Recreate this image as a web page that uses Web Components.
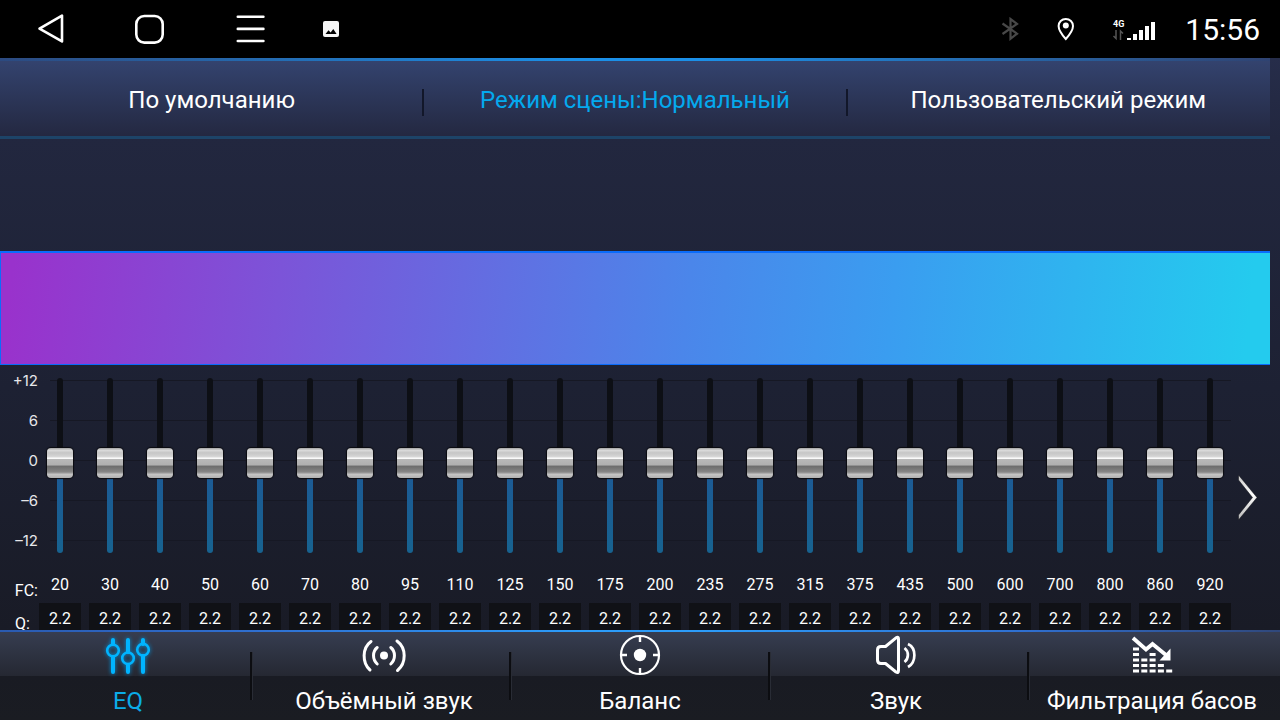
<!DOCTYPE html>
<html lang="ru">
<head>
<meta charset="utf-8">
<title>Эквалайзер</title>
<style>
  html, body { height: 100%; margin: 0; background: #000; }
  body { font-family: Roboto, "Liberation Sans", sans-serif; color: #fff; }
</style>
</head>
<body>
<eq-app></eq-app>

<template id="t-app">
  <style>
    :host { display: flex; flex-direction: column; height: 100vh; overflow: hidden; }
    main { flex: 1; min-height: 0; overflow: hidden; display: flex; flex-direction: column;
      background: linear-gradient(#262d4a, #22273f 80px, #1d2133 330px, #191b26); }
    .curve { height: 114px; box-sizing: border-box; margin: 112px 10px 0 0; flex: none;
      border: solid #0a6cfb; border-width: 2px 0 1px 1px;
      background: linear-gradient(96deg, #9932cc 1%, #7c54d8 22%, #4b86ea 54%, #3a9df0 70%, #24cbee 98%); }
  </style>
  <status-bar></status-bar>
  <main>
    <mode-bar>
      <mode-tab>По умолчанию</mode-tab>
      <mode-tab active>Режим сцены:Нормальный</mode-tab>
      <mode-tab>Пользовательский режим</mode-tab>
    </mode-bar>
    <div class="curve"></div>
    <eq-panel></eq-panel>
  </main>
  <nav-bar>
    <nav-tab active icon="eq">EQ</nav-tab>
    <nav-tab icon="surround">Объёмный звук</nav-tab>
    <nav-tab icon="balance">Баланс</nav-tab>
    <nav-tab icon="sound">Звук</nav-tab>
    <nav-tab icon="bass">Фильтрация басов</nav-tab>
  </nav-bar>
</template>

<template id="t-status">
  <style>
    :host { display: flex; align-items: center; height: 58px; flex: none; box-sizing: border-box; padding: 0 20px 0 35px; background: #000; color: #fff; }
    button { all: unset; width: 32px; height: 32px; margin-right: 68px; cursor: pointer; }
    button.last { margin-right: 56px; }
    svg { display: block; }
    .fill { flex: 1; }
    .gap { margin-right: 36px; }
    .signal { margin-right: 29px; }
    time { font-size: 30px; line-height: 40px; padding-top: 2px; }
    text { font: bold 9px Roboto, sans-serif; }
  </style>
  <button aria-label="Назад"><svg width="32" height="32" fill="none" stroke="#fff" stroke-width="2.6" stroke-linejoin="round"><path d="M4.5 15.6 27 2.6V28.4Z"/></svg></button>
  <button aria-label="Домой"><svg width="32" height="32" fill="none" stroke="#fff" stroke-width="2.6"><rect x="1.3" y="3" width="26.4" height="26.6" rx="8"/></svg></button>
  <button class="last" aria-label="Недавние"><svg width="32" height="32" stroke="#fff" stroke-width="2.6" stroke-linecap="round"><path d="M2.8 3.8H28.4M2.8 15.9H28.4M2.8 28H28.4"/></svg></button>
  <svg width="16" height="16"><rect width="16" height="16" rx="2" fill="#f5f5f5"/><path d="M2.5 13 5.5 9.3 7.6 11.6 10.3 7.9 13.6 13Z" fill="#000"/></svg>
  <span class="fill"></span>
  <svg class="gap" width="20" height="24" fill="none" stroke="#484848" stroke-width="2.200"><path d="M2.500 6.5 17 16.7 10.500 21.8V2L17 6.9 2.500 17"/></svg>
  <svg class="gap" width="20" height="24"><path d="M9.8 2C5.7 2 2.6 5.1 2.6 9 2.6 14 9.8 22 9.8 22S17 14 17 9C17 5.1 13.900 2 9.8 2Z" fill="none" stroke="#fff" stroke-width="2"/><circle cx="9.800" cy="8.600" r="3" fill="#fff"/></svg>
  <svg class="signal" width="44" height="24" fill="#fff"><text x="1" y="10">4G</text><path d="M15 21h4v2h-4zM21 17h4v6h-4zM27 13h4v10h-4zM33 9h4v14h-4zM39 5h4v18h-4z"/><path d="M4 13V21.500L1.500 19M8.500 23V14L11 16.500" fill="none" stroke="#555" stroke-width="1.500"/></svg>
  <time>15:56</time>
</template>

<template id="t-mode-bar">
  <style>
    :host { display: grid; grid-template-columns: repeat(3, 1fr); height: 81px; flex: none; margin-right: 10px; box-sizing: border-box;
      background: linear-gradient(90deg, #2c4a80, #1b90e8 45%, #1b90e8 55%, #2f4372) top / 100% 3px no-repeat,
        linear-gradient(#1d4468, #1d4468) bottom / 100% 3px no-repeat,
        linear-gradient(#344470, #23273f); }
  </style>
  <slot></slot>
</template>

<template id="t-mode-tab">
  <style>
    :host { display: flex; align-items: center; }
    :host(:not(:last-child))::after { content: ""; width: 2px; height: 27px; margin: 7px -1px 0; background: #12172a; }
    button { all: unset; flex: 1; text-align: center; font-size: 24px; line-height: 32px; white-space: nowrap; padding-top: 3px; cursor: pointer; }
    :host([active]) button { color: #04a9ee; }
  </style>
  <button><slot></slot></button>
</template>

<template id="t-panel">
  <style>
    :host { display: grid; grid-template-columns: 39px 1fr 49px; flex: 1; min-height: 0; box-sizing: border-box; padding-top: 13px; }
    .scale { display: flex; flex-direction: column; text-align: right; font-size: 16px; line-height: 20px; }
    .db { display: grid; row-gap: 20px; margin: -7px 1px 30px 0; font: 15px/20px Inter, sans-serif; color: #e6e7ea; }
    .fc { margin: 0 1px 13px 0; }
    .q { margin-right: 9px; }
    .bands { display: grid; grid-auto-flow: column; grid-auto-columns: 1fr; column-gap: 8px; align-content: start;
      background: repeating-linear-gradient(transparent 0 2px, #161824 2px 3px, transparent 3px 40px) 11px 0 / 100% 170px no-repeat; }
    button { all: unset; align-self: start; height: 48px; margin: 95px 0 0 4px; cursor: pointer; }
  </style>
  <div class="scale">
    <div class="db"><span>+12</span><span>6</span><span>0</span><span>–6</span><span>–12</span></div>
    <span class="fc">FC:</span>
    <span class="q">Q:</span>
  </div>
  <div class="bands"></div>
  <button aria-label="Далее"><svg width="24" height="48"><defs><linearGradient id="g" x2="0" y2="1"><stop stop-color="#c8c8c8"/><stop offset=".45" stop-color="#fff"/><stop offset="1" stop-color="#b5b5b5"/></linearGradient></defs><path d="M3.500 2 22 24.500 3.500 47V42L17.500 24.500 3.500 7Z" fill="url(#g)" stroke="#0d0e14" stroke-width=".5"/></svg></button>
</template>

<template id="t-band">
  <style>
    :host { display: flex; flex-direction: column; align-items: center; min-width: 0; }
    .track { display: grid; justify-items: center; height: 175px; }
    .track::before { content: ""; grid-area: 1 / 1; width: 6px; border-radius: 3px; background: linear-gradient(#0d0f15 50%, #1d5a96 50%, #17628f); }
    .level { grid-area: 1 / 1; z-index: 1; appearance: none; writing-mode: vertical-lr; direction: rtl; box-sizing: border-box; width: 28px; height: 175px; margin: 0; padding: 0 0 6px; background: none; }
    .level::-webkit-slider-runnable-track { width: 28px; background: none; }
    .level::-webkit-slider-thumb { appearance: none; width: 26px; height: 30px; margin: 0 1px; border-radius: 4px; box-shadow: 0 0 1px 1px #0a0b10;
      background: linear-gradient(#a4a4a4, #dadada 8%, #c6c6c6 16%, #d4d4d4 28%, #fafafa 34%, #fafafa 37%, #b8b8b8 38%, #b0b0b0 57%, #6c6c6c 60%, #868686 80%, #c4c4c4 88%, #b0b0b0); }
    label { font-size: 16px; line-height: 20px; margin: 22px 0 8px; }
    .q { box-sizing: border-box; width: 100%; height: 31px; border: 0; padding: 0; text-align: center; font: 16px/20px Roboto, sans-serif; color: #fff; background: #101116; }
  </style>
  <div class="track"><input class="level" id="level" type="range" min="-12" max="12" value="0"></div>
  <label for="level"></label>
  <input class="q" type="text" value="2.2" aria-label="Q">
</template>

<template id="t-nav-bar">
  <style>
    :host { position: relative; display: grid; grid-template-columns: repeat(5, 1fr); height: 90px; flex: none; overflow: hidden;
      background: linear-gradient(90deg, #2a5ab0, #2f6fd0 20%, #2c9cfa 45%, #2c9cfa 55%, #2f6fd0 80%, #30487c) top / 100% 2px no-repeat,
        linear-gradient(#373e52, #252832 46px, #191b23 46px, #1a1c22); }
    .rules { position: absolute; inset: 22px -8px 20px -7px; display: grid; grid-template-columns: repeat(5, 1fr); pointer-events: none; }
    .rules i { border-right: 2px solid #0c0d11; box-shadow: 1px 0 #292c35; }
  </style>
  <slot></slot>
  <div class="rules"><i></i><i></i><i></i><i></i><i></i></div>
</template>

<template id="t-nav-tab">
  <style>
    :host { display: block; }
    button { all: unset; display: flex; flex-direction: column; align-items: center; width: 100%; cursor: pointer; white-space: nowrap; font-size: 24px; line-height: 32px; }
    svg { display: block; margin: 2px 0 5px; }
    :host([active]) button { color: #0bace8; }
    :host([active]) svg { color: #00b4ff; filter: drop-shadow(0 0 2px #0090d8); }
  </style>
  <button><svg width="48" height="48" fill="none" stroke="currentColor"></svg><span><slot></slot></span></button>
</template>

<script>
const ICONS = {
  eq: '<g stroke-width="4" stroke-linecap="round"><path d="M9 8v4M9 25v15M24 8v12M24 33v7M39 8v4M39 24v16"/></g><g stroke-width="2.600"><circle cx="9" cy="18.500" r="5.800"/><circle cx="24" cy="26.300" r="5.800"/><circle cx="39" cy="17.700" r="5.800"/></g>',
  surround: '<circle cx="24" cy="23.500" r="4" fill="currentColor" stroke="none"/><g stroke-linecap="round" stroke-width="3"><path d="M17.200 15.500C12.300 19.500 12.300 27.500 17.200 32M30.800 15.500C35.700 19.500 35.700 27.500 30.800 32"/><path d="M11 9.500C2 16 2 31 10 38M37 9C46.500 16 46.500 31 37.500 38.500"/></g>',
  balance: '<circle cx="24" cy="23" r="19" stroke-width="2.200"/><circle cx="24" cy="23" r="6.200" fill="currentColor" stroke="none"/><path stroke-width="2.400" d="M24 4v6M24 36v6M5 23h6M37 23h6"/>',
  sound: '<path stroke-width="3" stroke-linejoin="round" d="M5.500 18Q5.500 14.500 9 14.500H13.500L24 5.800Q26.500 4.500 26.500 7V38.500Q26.500 41.500 24 40L13.500 31.500H9Q5.500 31.500 5.500 28Z"/><g stroke-width="2.700"><path d="M32.500 16C37 19.500 37 26.500 32.500 30"/><path d="M36 12C44.500 16 44.500 30 36 35"/></g>',
  bass: '<path stroke-width="3.800" d="M5 6 18 17.500 24.500 12 38 23"/><path d="M42.500 16.500V28.500H31.500Z" fill="currentColor" stroke="none"/><g stroke-width="2.800" stroke-dasharray="6 2.300"><path d="M5 17h6M5 22.500h6M21.600 22.500h6M5 28h23M5 33.500h31M5 39h39.500"/></g>'
};
const stamp = (el, id) => {
  const root = el.attachShadow({ mode: 'open' });
  root.append(document.getElementById(id).content.cloneNode(true));
  return root;
};
const simple = (name, id) => customElements.define(name, class extends HTMLElement {
  constructor() { super(); stamp(this, id); }
});

customElements.define('eq-band', class extends HTMLElement {
  connectedCallback() {
    if (this.shadowRoot) return;
    stamp(this, 't-band').querySelector('label').textContent = this.getAttribute('frequency');
  }
});
customElements.define('eq-panel', class extends HTMLElement {
  connectedCallback() {
    if (this.shadowRoot) return;
    const bands = stamp(this, 't-panel').querySelector('.bands');
    for (const f of [20, 30, 40, 50, 60, 70, 80, 95, 110, 125, 150, 175, 200, 235, 275, 315, 375, 435, 500, 600, 700, 800, 860, 920]) {
      const band = document.createElement('eq-band');
      band.setAttribute('frequency', f);
      bands.append(band);
    }
  }
});
customElements.define('nav-tab', class extends HTMLElement {
  connectedCallback() {
    if (this.shadowRoot) return;
    stamp(this, 't-nav-tab').querySelector('svg').innerHTML = ICONS[this.getAttribute('icon')];
  }
});
simple('status-bar', 't-status');
simple('mode-bar', 't-mode-bar');
simple('mode-tab', 't-mode-tab');
simple('nav-bar', 't-nav-bar');
simple('eq-app', 't-app');
</script>
</body>
</html>
